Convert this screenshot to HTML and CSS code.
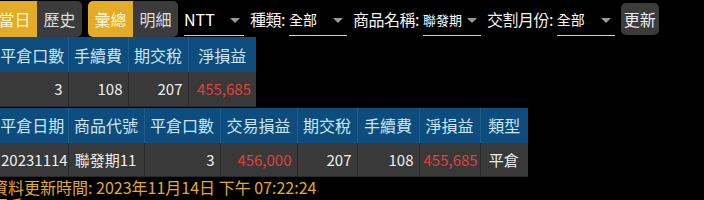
FILE: index.html
```html
<!DOCTYPE html>
<html lang="zh-Hant">
<head>
    <meta charset="UTF-8">
    <title>損益查詢</title>
    <link rel="stylesheet" href="styles.css">
</head>
<body>
    <div class="page">
        <div class="toolbar">
            <div class="btn-group">
                <button class="tab active">當日</button>
                <button class="tab">歷史</button>
            </div>
            <div class="btn-group">
                <button class="tab active">彙總</button>
                <button class="tab">明細</button>
            </div>
            <div class="select select-ccy"><span>NTT</span><i class="caret"></i></div>
            <label class="field-label">種類:</label>
            <div class="select"><span>全部</span><i class="caret"></i></div>
            <label class="field-label">商品名稱:</label>
            <div class="select select-small"><span>聯發期</span><i class="caret"></i></div>
            <label class="field-label">交割月份:</label>
            <div class="select"><span>全部</span><i class="caret"></i></div>
            <button class="refresh">更新</button>
        </div>

        <table class="grid grid-sum">
            <colgroup>
                <col class="c-first">
                <col class="c-60">
                <col class="c-60">
                <col class="c-68">
            </colgroup>
            <thead>
                <tr>
                    <th>平倉口數</th>
                    <th>手續費</th>
                    <th>期交稅</th>
                    <th>淨損益</th>
                </tr>
            </thead>
            <tbody>
                <tr>
                    <td class="num">3</td>
                    <td class="num">108</td>
                    <td class="num">207</td>
                    <td class="num loss">455,685</td>
                </tr>
            </tbody>
        </table>

        <table class="grid grid-detail">
            <colgroup>
                <col class="c-first">
                <col class="c-76">
                <col class="c-76">
                <col class="c-77">
                <col class="c-60">
                <col class="c-62">
                <col class="c-61">
                <col class="c-48">
            </colgroup>
            <thead>
                <tr>
                    <th>平倉日期</th>
                    <th>商品代號</th>
                    <th>平倉口數</th>
                    <th>交易損益</th>
                    <th>期交稅</th>
                    <th>手續費</th>
                    <th>淨損益</th>
                    <th>類型</th>
                </tr>
            </thead>
            <tbody>
                <tr>
                    <td>20231114</td>
                    <td class="center">聯發期11</td>
                    <td class="num">3</td>
                    <td class="num loss">456,000</td>
                    <td class="num">207</td>
                    <td class="num">108</td>
                    <td class="num loss">455,685</td>
                    <td class="center">平倉</td>
                </tr>
            </tbody>
        </table>

        <p class="update-time">資料更新時間: 2023年11月14日 下午 07:22:24</p>
        <p class="update-time">帳戶: 3</p>
    </div>
</body>
</html>
```

FILE: styles.css
```css
* {
    margin: 0;
    padding: 0;
    box-sizing: border-box;
}

body {
    background-color: #000;
    color: #eee;
    font-family: "Noto Sans CJK TC", "Noto Sans", sans-serif;
    font-size: 16px;
    overflow: hidden;
}

.page {
    margin-left: -8px;
}

.toolbar {
    display: flex;
    align-items: center;
    height: 37px;
    gap: 4px;
}

.btn-group {
    display: flex;
    height: 36px;
    margin-right: 2px;
}

.tab {
    font-family: inherit;
    font-size: 16px;
    border: none;
    width: 45px;
    height: 36px;
    background-color: #3b3b3b;
    color: #ddd;
}

.tab:first-child {
    border-radius: 5px 0 0 5px;
}

.tab:last-child {
    border-radius: 0 5px 5px 0;
}

.tab.active {
    background-color: #e3ab27;
    color: #fff4d8;
}

.select {
    position: relative;
    display: flex;
    align-items: center;
    width: 58px;
    height: 32px;
    margin-top: 2px;
    border-bottom: 1px solid #cfcfcf;
    font-size: 14px;
    color: #fff;
}

.select-ccy {
    width: 60px;
    font-size: 16px;
}

.select-small {
    font-size: 13px;
}

.caret {
    position: absolute;
    right: 4px;
    top: 14px;
    border-left: 5px solid transparent;
    border-right: 5px solid transparent;
    border-top: 5px solid #999;
}

.field-label {
    font-size: 16px;
    color: #f2f2f2;
    margin-left: 2px;
    letter-spacing: -0.5px;
}

.refresh {
    font-family: inherit;
    font-size: 16px;
    color: #eee;
    background-color: #3b3b3b;
    border: none;
    border-radius: 5px;
    width: 38px;
    height: 32px;
    margin-left: 2px;
}

.grid {
    border-collapse: collapse;
    table-layout: fixed;
    margin-left: 5px;
    margin-bottom: 1px;
}

.grid-sum {
    width: 259px;
}

.grid-detail {
    width: 531px;
}

.c-first { width: 71px; }
.c-48 { width: 48px; }
.c-60 { width: 60px; }
.c-61 { width: 61px; }
.c-62 { width: 62px; }
.c-68 { width: 68px; }
.c-76 { width: 76px; }
.c-77 { width: 77px; }

.grid th {
    background-color: #0d4c7c;
    color: #cbe6f6;
    font-weight: normal;
    font-size: 16px;
    height: 35px;
    padding: 0 2px;
    border-left: 1px solid #1d5d8c;
    text-align: center;
    white-space: nowrap;
}

.grid td {
    background-color: #393939;
    color: #eee;
    font-size: 15px;
    height: 34px;
    padding: 0 5px 0 4px;
    border-left: 1px solid #2a2a2a;
    border-bottom: 1px solid #2a2a2a;
    white-space: nowrap;
}

.grid th:first-child,
.grid td:first-child {
    border-left: none;
}

.grid td.num {
    text-align: right;
}

.grid td.center {
    text-align: center;
}

.grid td.loss {
    color: #e2403b;
}

.update-time {
    color: #e3ab27;
    font-size: 16px;
    line-height: 18px;
}
```
